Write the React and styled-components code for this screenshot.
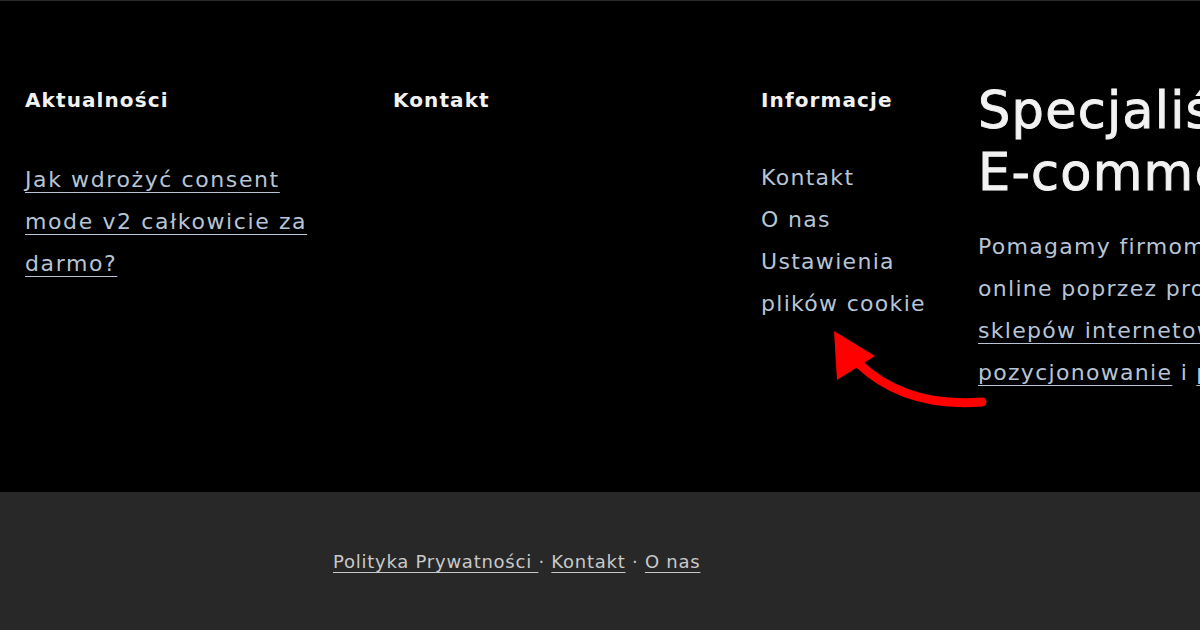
import React from "react";
import styled, { createGlobalStyle } from "styled-components";

const Global = createGlobalStyle`
  html, body {
    margin: 0;
    padding: 0;
    background: #000;
    overflow: hidden;
  }
  body {
    font-family: "DejaVu Sans", "Open Sans", sans-serif;
  }
`;

const Page = styled.div`
  width: 1200px;
  height: 630px;
  overflow: hidden;
  display: flex;
  flex-direction: column;
  border-top: 1px solid #2b2b2b;
  box-sizing: border-box;
  position: relative;
`;

const Top = styled.section`
  height: 491px;
  background: #000;
  display: grid;
  grid-template-columns: 368px 368px 217px 460px;
  padding: 84px 0 0 25px;
  box-sizing: border-box;
`;

const Column = styled.div`
  display: flex;
  flex-direction: column;
`;

const Heading = styled.h3`
  margin: 0 0 44px;
  font-size: 20px;
  line-height: 30px;
  font-weight: 700;
  letter-spacing: 1.1px;
  color: #f2f2f2;
`;

const PostLink = styled.a`
  font-size: 22px;
  line-height: 42px;
  color: #b7c4d6;
  text-decoration: underline;
  text-underline-offset: 5px;
  text-decoration-thickness: 1px;
  letter-spacing: 1.6px;
`;

const InfoList = styled.ul`
  list-style: none;
  margin: -2px 0 0;
  padding: 0;
  width: 210px;
`;

const InfoItem = styled.li`
  font-size: 22px;
  line-height: 42px;
  color: #b7c4d6;
  letter-spacing: 1.3px;
`;

const BigTitle = styled.h2`
  margin: -5px 0 22px;
  font-size: 51px;
  line-height: 62px;
  font-weight: 400;
  color: #f2f2f2;
  white-space: nowrap;
  letter-spacing: 1.2px;
  -webkit-text-stroke: 0.9px #f2f2f2;
`;

const Lead = styled.p`
  margin: 0;
  font-size: 22px;
  line-height: 42px;
  color: #b7c4d6;
  white-space: nowrap;
  letter-spacing: 1.3px;
`;

const LeadLink = styled.a`
  color: #b7c4d6;
  text-decoration: underline;
  text-underline-offset: 5px;
  text-decoration-thickness: 1px;
`;

const Bottom = styled.footer`
  flex: 1;
  background: #282828;
  display: flex;
  align-items: center;
  padding: 0 0 0 333px;
`;

const FooterLinks = styled.div`
  font-size: 18px;
  color: #c9c9c9;
  letter-spacing: 0.75px;
`;

const FooterLink = styled.a`
  color: #c9c9c9;
  text-decoration: underline;
  text-underline-offset: 4px;
  text-decoration-thickness: 1px;
`;

const Arrow = styled.svg`
  position: absolute;
  left: 0;
  top: 0;
  pointer-events: none;
`;

export default function App() {
  return (
    <>
      <Global />
      <Page>
        <Top>
          <Column>
            <Heading>Aktualności</Heading>
            <PostLink href="#">
              Jak wdrożyć consent
              <br />
              mode v2 całkowicie za
              <br />
              darmo?
            </PostLink>
          </Column>
          <Column>
            <Heading>Kontakt</Heading>
          </Column>
          <Column>
            <Heading>Informacje</Heading>
            <InfoList>
              <InfoItem>Kontakt</InfoItem>
              <InfoItem>O nas</InfoItem>
              <InfoItem>Ustawienia plików cookie</InfoItem>
            </InfoList>
          </Column>
          <Column>
            <BigTitle>
              Specjaliści
              <br />
              E-commerce
            </BigTitle>
            <Lead>
              Pomagamy firmom rozwijać sprzedaż
              <br />
              online poprzez projektowanie
              <br />
              <LeadLink href="#">sklepów internetowych</LeadLink>,
              <br />
              <LeadLink href="#">pozycjonowanie</LeadLink> i <LeadLink href="#">płatne kampanie</LeadLink>
            </Lead>
          </Column>
        </Top>
        <Bottom>
          <FooterLinks>
            <FooterLink href="#">Polityka Prywatności </FooterLink> ·{" "}
            <FooterLink href="#">Kontakt</FooterLink> ·{" "}
            <FooterLink href="#">O nas</FooterLink>
          </FooterLinks>
        </Bottom>
        <Arrow width="1200" height="630" viewBox="0 0 1200 630">
          <path
            d="M982 401 Q905 407 858 362"
            fill="none"
            stroke="#ff0000"
            strokeWidth="9"
            strokeLinecap="round"
          />
          <polygon points="834,330 875,355 837,379" fill="#ff0000" />
        </Arrow>
      </Page>
    </>
  );
}
